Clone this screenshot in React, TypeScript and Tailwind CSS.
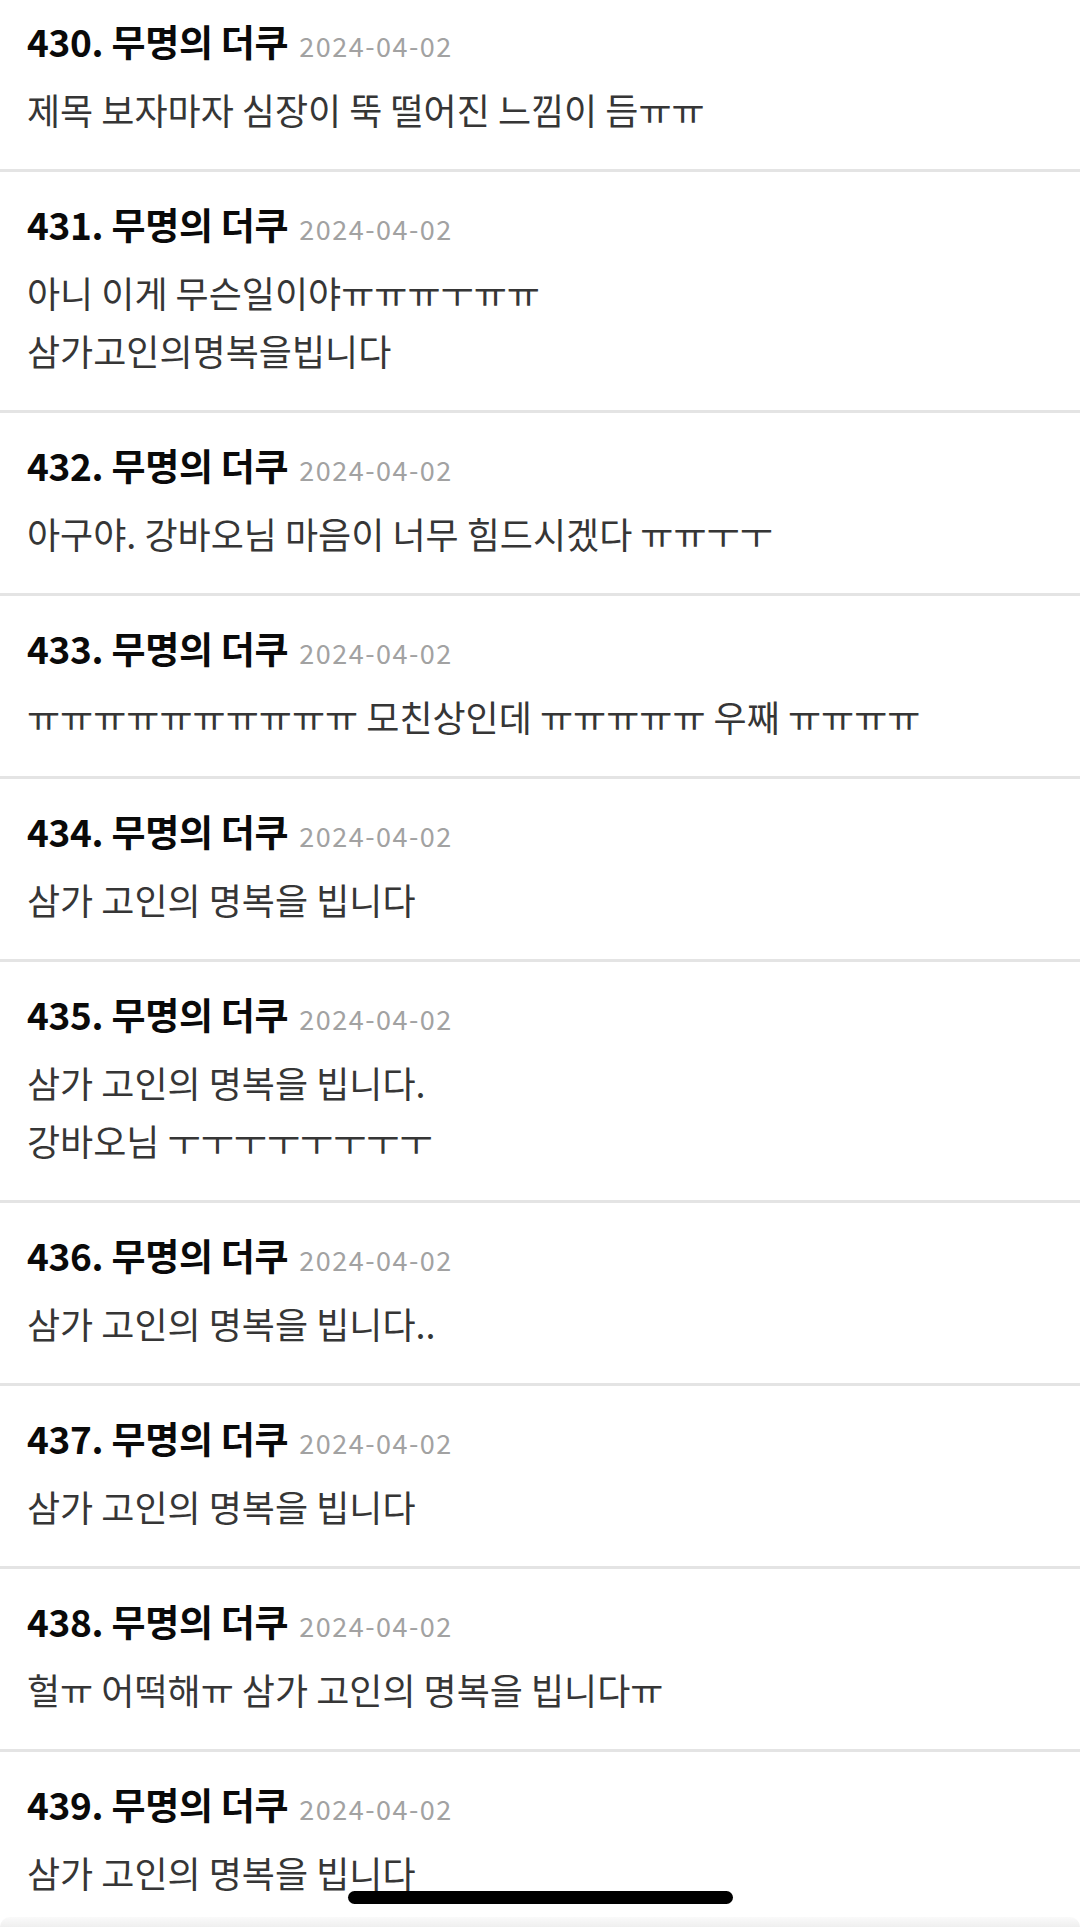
import React from 'react';

type Comment = {
  no: number;
  lines: string[];
};

const comments: Comment[] = [
  { no: 430, lines: ['제목 보자마자 심장이 뚝 떨어진 느낌이 듬ㅠㅠ'] },
  { no: 431, lines: ['아니 이게 무슨일이야ㅠㅠㅠㅜㅠㅠ', '삼가고인의명복을빕니다'] },
  { no: 432, lines: ['아구야. 강바오님 마음이 너무 힘드시겠다 ㅠㅠㅜㅜ'] },
  { no: 433, lines: ['ㅠㅠㅠㅠㅠㅠㅠㅠㅠㅠ 모친상인데 ㅠㅠㅠㅠㅠ 우째 ㅠㅠㅠㅠ'] },
  { no: 434, lines: ['삼가 고인의 명복을 빕니다'] },
  { no: 435, lines: ['삼가 고인의 명복을 빕니다.', '강바오님 ㅜㅜㅜㅜㅜㅜㅜㅜ'] },
  { no: 436, lines: ['삼가 고인의 명복을 빕니다..'] },
  { no: 437, lines: ['삼가 고인의 명복을 빕니다'] },
  { no: 438, lines: ['헐ㅠ 어떡해ㅠ 삼가 고인의 명복을 빕니다ㅠ'] },
  { no: 439, lines: ['삼가 고인의 명복을 빕니다'] },
];

const CommentItem: React.FC<{ item: Comment }> = ({ item }) => {
  return (
    <li className="border-b-[3px] border-[#e4e4e4] px-[27px] pt-[28px] pb-[31px]">
      {/* name + date */}
      <div className="flex items-baseline h-[48px] leading-[48px]">
        <span className="text-[37px] font-bold text-[#0a0a0a] tracking-[-0.3px]">
          {item.no}. 무명의 더쿠
        </span>
        <span className="ml-[11px] text-[27px] text-[#a2a2a2] tracking-[1.5px]">2024-04-02</span>
      </div>

      {/* body */}
      <div className="mt-[15px] text-[36px] leading-[58px] text-[#363636]">
        {item.lines.map((line, i) => (
          <p key={i} className="whitespace-nowrap">
            {line}
          </p>
        ))}
      </div>
    </li>
  );
};

export default function App() {
  return (
    <div
      className="relative h-[1927px] w-[1080px] overflow-hidden bg-white"
      style={{ fontFamily: '"Noto Sans CJK KR", "Noto Sans", sans-serif' }}
    >
      <ul className="mt-[-11px]">
        {comments.map((c) => (
          <CommentItem key={c.no} item={c} />
        ))}
      </ul>

      {/* bottom edge + home indicator */}
      <div className="absolute bottom-0 left-0 right-0 h-[10px] rounded-t-[14px] bg-gradient-to-b from-[#fafafa] to-[#efefef]" />
      <div className="absolute left-[348px] top-[1891px] h-[13px] w-[385px] rounded-full bg-black" />
    </div>
  );
}
